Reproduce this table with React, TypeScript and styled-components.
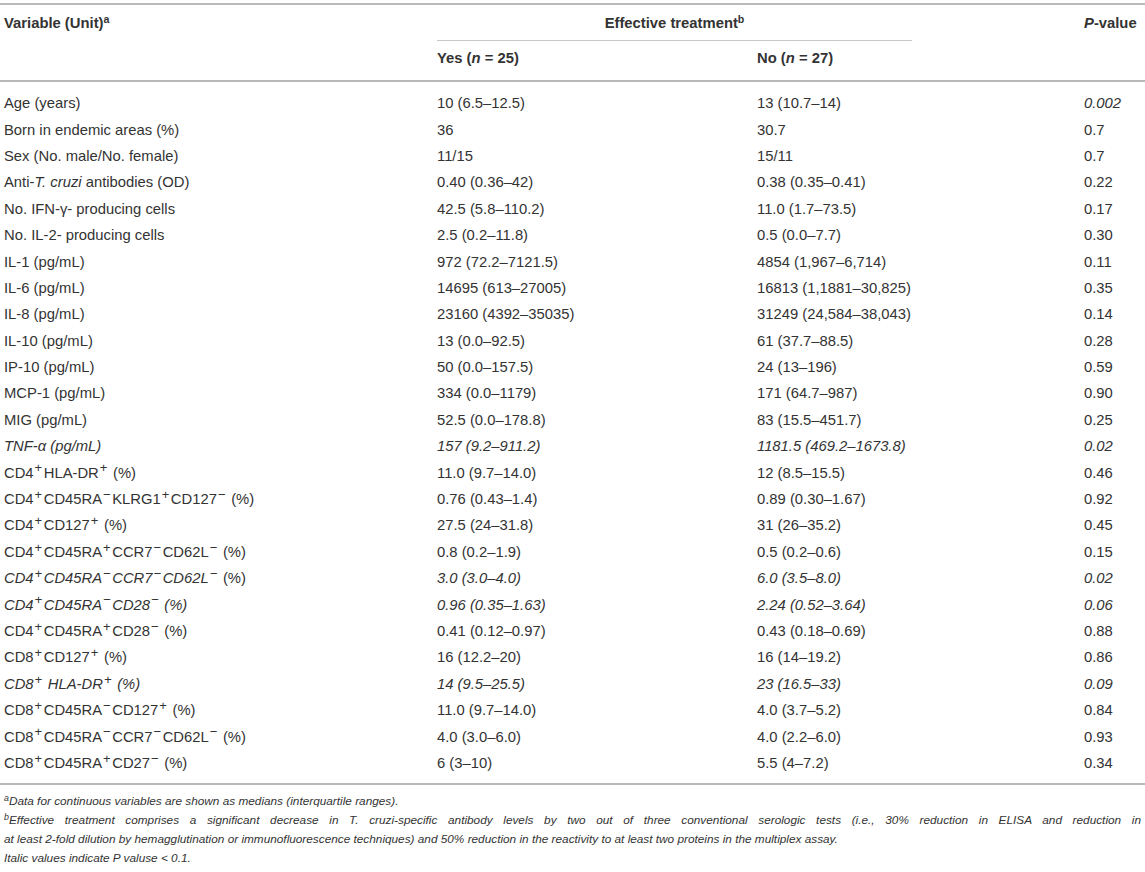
import React from "react";
import styled, { createGlobalStyle } from "styled-components";

const Global = createGlobalStyle`
  html, body { margin: 0; padding: 0; background: #fff; }
  body { font-family: "Liberation Sans", Arial, Helvetica, sans-serif; color: #333; }
`;

const Page = styled.div`
  width: 1145px;
  padding-top: 3px;
`;

const Table = styled.table`
  width: 1145px;
  border-collapse: collapse;
  table-layout: fixed;
  font-size: 14.8px;
  border-top: 2px solid #b9b9b9;
  border-bottom: 2px solid #b9b9b9;
`;

const Head = styled.thead`
  border-bottom: 2px solid #b9b9b9;
`;

const HeadCell = styled.th<{ $top?: boolean; $h: number }>`
  height: ${(p) => p.$h}px;
  padding: ${(p) => (p.$top ? "8px 4px 0" : "0 4px")};
  text-align: left;
  vertical-align: ${(p) => (p.$top ? "top" : "middle")};
  font-weight: bold;
  line-height: 18px;
  box-sizing: border-box;
  white-space: nowrap;
`;

const GroupCell = styled.th`
  padding: 0 4px;
  height: 35px;
  vertical-align: top;
  font-weight: bold;
`;

const GroupTitle = styled.div`
  margin-right: 164px;
  height: 36px;
  line-height: 37px;
  border-bottom: 1px solid #c8c8c8;
  box-sizing: border-box;
  text-align: center;
`;

const Row = styled.tr<{ $italic?: boolean; $first?: boolean; $last?: boolean }>`
  font-style: ${(p) => (p.$italic ? "italic" : "normal")};
  & > td {
    height: 26.4px;
    padding: ${(p) => (p.$first ? "8px" : "0")} 4px ${(p) => (p.$last ? "7px" : "0")};
    line-height: 18px;
    vertical-align: middle;
    white-space: nowrap;
  }
`;

const Cell = styled.td<{ $italic?: boolean }>`
  font-style: ${(p) => (p.$italic ? "italic" : "inherit")};
`;

const Sup = styled.sup`
  font-size: 0.88em;
  line-height: 0;
  vertical-align: 0.4em;
  padding: 0 1.5px 0 1px;
`;

const HeadSup = styled.sup`
  font-size: 0.72em;
  line-height: 0;
  vertical-align: 0.5em;
`;

const Upright = styled.span`
  font-style: normal;
`;

const Notes = styled.div`
  padding: 7px 4px 0;
  font-size: 11.8px;
  font-style: italic;
  line-height: 19px;
`;

const Note = styled.div`
  margin: 0;
`;

const JustifiedLine = styled.span`
  display: block;
  text-align: justify;
  text-align-last: justify;
`;

const NoteMark = styled.sup`
  font-size: 0.75em;
  line-height: 0;
  vertical-align: 0.45em;
`;

const P = () => <Sup>+</Sup>;
const N = () => <Sup>−</Sup>;

type RowData = {
  label: React.ReactNode;
  yes: string;
  no: string;
  p: string;
  italic?: boolean;
  pItalic?: boolean;
};

const rows: RowData[] = [
  { label: "Age (years)", yes: "10 (6.5–12.5)", no: "13 (10.7–14)", p: "0.002", pItalic: true },
  { label: "Born in endemic areas (%)", yes: "36", no: "30.7", p: "0.7" },
  { label: "Sex (No. male/No. female)", yes: "11/15", no: "15/11", p: "0.7" },
  {
    label: (
      <>
        Anti-<i>T. cruzi</i> antibodies (OD)
      </>
    ),
    yes: "0.40 (0.36–42)",
    no: "0.38 (0.35–0.41)",
    p: "0.22",
  },
  { label: "No. IFN-γ- producing cells", yes: "42.5 (5.8–110.2)", no: "11.0 (1.7–73.5)", p: "0.17" },
  { label: "No. IL-2- producing cells", yes: "2.5 (0.2–11.8)", no: "0.5 (0.0–7.7)", p: "0.30" },
  { label: "IL-1 (pg/mL)", yes: "972 (72.2–7121.5)", no: "4854 (1,967–6,714)", p: "0.11" },
  { label: "IL-6 (pg/mL)", yes: "14695 (613–27005)", no: "16813 (1,1881–30,825)", p: "0.35" },
  { label: "IL-8 (pg/mL)", yes: "23160 (4392–35035)", no: "31249 (24,584–38,043)", p: "0.14" },
  { label: "IL-10 (pg/mL)", yes: "13 (0.0–92.5)", no: "61 (37.7–88.5)", p: "0.28" },
  { label: "IP-10 (pg/mL)", yes: "50 (0.0–157.5)", no: "24 (13–196)", p: "0.59" },
  { label: "MCP-1 (pg/mL)", yes: "334 (0.0–1179)", no: "171 (64.7–987)", p: "0.90" },
  { label: "MIG (pg/mL)", yes: "52.5 (0.0–178.8)", no: "83 (15.5–451.7)", p: "0.25" },
  { label: "TNF-α (pg/mL)", yes: "157 (9.2–911.2)", no: "1181.5 (469.2–1673.8)", p: "0.02", italic: true },
  {
    label: (
      <>
        CD4<P />HLA-DR<P /> (%)
      </>
    ),
    yes: "11.0 (9.7–14.0)",
    no: "12 (8.5–15.5)",
    p: "0.46",
  },
  {
    label: (
      <>
        CD4<P />CD45RA<N />KLRG1<P />CD127<N /> (%)
      </>
    ),
    yes: "0.76 (0.43–1.4)",
    no: "0.89 (0.30–1.67)",
    p: "0.92",
  },
  {
    label: (
      <>
        CD4<P />CD127<P /> (%)
      </>
    ),
    yes: "27.5 (24–31.8)",
    no: "31 (26–35.2)",
    p: "0.45",
  },
  {
    label: (
      <>
        CD4<P />CD45RA<P />CCR7<N />CD62L<N /> (%)
      </>
    ),
    yes: "0.8 (0.2–1.9)",
    no: "0.5 (0.2–0.6)",
    p: "0.15",
  },
  {
    label: (
      <>
        CD4<P />CD45RA<N />CCR7<N />CD62L<N /> <Upright>(%)</Upright>
      </>
    ),
    yes: "3.0 (3.0–4.0)",
    no: "6.0 (3.5–8.0)",
    p: "0.02",
    italic: true,
  },
  {
    label: (
      <>
        CD4<P />CD45RA<N />CD28<N /> (%)
      </>
    ),
    yes: "0.96 (0.35–1.63)",
    no: "2.24 (0.52–3.64)",
    p: "0.06",
    italic: true,
  },
  {
    label: (
      <>
        CD4<P />CD45RA<P />CD28<N /> (%)
      </>
    ),
    yes: "0.41 (0.12–0.97)",
    no: "0.43 (0.18–0.69)",
    p: "0.88",
  },
  {
    label: (
      <>
        CD8<P />CD127<P /> (%)
      </>
    ),
    yes: "16 (12.2–20)",
    no: "16 (14–19.2)",
    p: "0.86",
  },
  {
    label: (
      <>
        CD8<P /> HLA-DR<P /> (%)
      </>
    ),
    yes: "14 (9.5–25.5)",
    no: "23 (16.5–33)",
    p: "0.09",
    italic: true,
  },
  {
    label: (
      <>
        CD8<P />CD45RA<N />CD127<P /> (%)
      </>
    ),
    yes: "11.0 (9.7–14.0)",
    no: "4.0 (3.7–5.2)",
    p: "0.84",
  },
  {
    label: (
      <>
        CD8<P />CD45RA<N />CCR7<N />CD62L<N /> (%)
      </>
    ),
    yes: "4.0 (3.0–6.0)",
    no: "4.0 (2.2–6.0)",
    p: "0.93",
  },
  {
    label: (
      <>
        CD8<P />CD45RA<P />CD27<N /> (%)
      </>
    ),
    yes: "6 (3–10)",
    no: "5.5 (4–7.2)",
    p: "0.34",
  },
];

export default function App() {
  return (
    <Page>
      <Global />
      <Table>
        <colgroup>
          <col style={{ width: 433 }} />
          <col style={{ width: 320 }} />
          <col style={{ width: 327 }} />
          <col />
        </colgroup>
        <Head>
          <tr>
            <HeadCell $h={35}>
              Variable (Unit)<HeadSup>a</HeadSup>
            </HeadCell>
            <GroupCell colSpan={2}>
              <GroupTitle>
                Effective treatment<HeadSup>b</HeadSup>
              </GroupTitle>
            </GroupCell>
            <HeadCell $h={35}>
              <i>P</i>-value
            </HeadCell>
          </tr>
          <tr>
            <HeadCell $h={40} $top />
            <HeadCell $h={40} $top>
              Yes (<i>n</i> = 25)
            </HeadCell>
            <HeadCell $h={40} $top>
              No (<i>n</i> = 27)
            </HeadCell>
            <HeadCell $h={40} $top />
          </tr>
        </Head>
        <tbody>
          {rows.map((r, i) => (
            <Row key={i} $italic={r.italic} $first={i === 0} $last={i === rows.length - 1}>
              <Cell>{r.label}</Cell>
              <Cell>{r.yes}</Cell>
              <Cell>{r.no}</Cell>
              <Cell $italic={r.pItalic}>{r.p}</Cell>
            </Row>
          ))}
        </tbody>
      </Table>
      <Notes>
        <Note>
          <NoteMark>a</NoteMark>Data for continuous variables are shown as medians (interquartile ranges).
        </Note>
        <Note>
          <JustifiedLine>
            <NoteMark>b</NoteMark>Effective treatment comprises a significant decrease in T. cruzi-specific antibody
            levels by two out of three conventional serologic tests (i.e., 30% reduction in ELISA and reduction in
          </JustifiedLine>
          at least 2-fold dilution by hemagglutination or immunofluorescence techniques) and 50% reduction in the
          reactivity to at least two proteins in the multiplex assay.
        </Note>
        <Note>Italic values indicate P valuse &lt; 0.1.</Note>
      </Notes>
    </Page>
  );
}
